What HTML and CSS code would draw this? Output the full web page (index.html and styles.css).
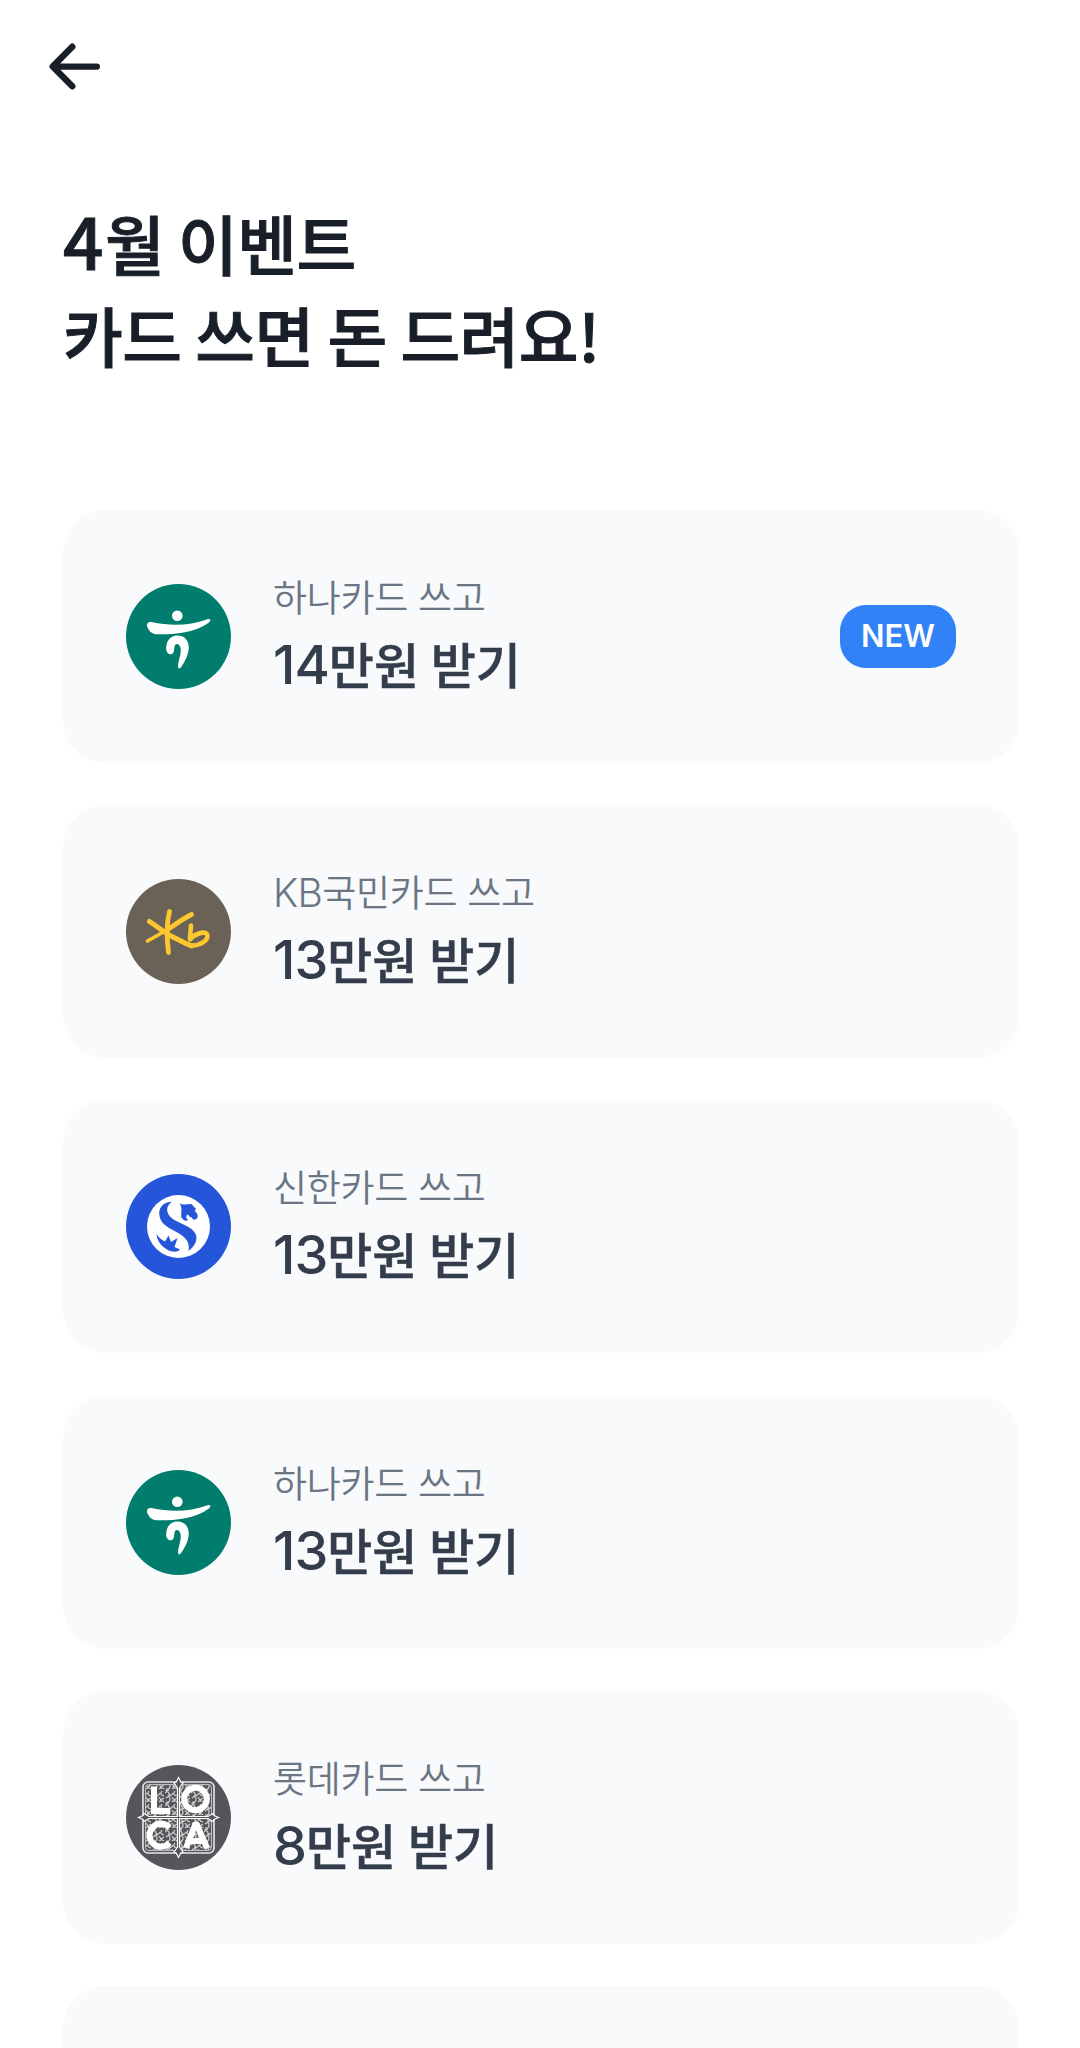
FILE: index.html
```html
<!DOCTYPE html>
<html lang="ko">

<head>
    <meta charset="UTF-8">
    <meta name="viewport" content="width=device-width, initial-scale=1.0">
    <title>4월 이벤트</title>
    <link rel="stylesheet" href="styles.css">
</head>

<body>
    <svg class="symbols" width="0" height="0">
        <symbol id="hana" viewBox="0 0 105 105">
            <circle cx="52.5" cy="52.5" r="52.5" fill="#007d6c" />
            <circle cx="51.3" cy="31.8" r="5.3" fill="#fff" />
            <path fill="#fff" d="M25.2 38C21.5 37.2 20 40.5 21.8 44C24 48.5 27 50.3 32 50.3C47 50.5 68 49.3 83 38.5C85.5 36.5 84.3 34.3 81.5 35.2C63 41.6 46 42.2 25.2 38Z" />
            <path fill="#fff" d="M51.5 51.5C43.5 51.5 39.8 58 40.2 65.5C40.5 69.7 44 71.3 46.3 69.7C49 68 47.5 64.8 49 61.3C50.5 58.5 54.3 60.5 54.7 65C55.2 71 52.3 76.5 52 82C52 85.5 54 84.8 55.5 82.5C59.5 76.5 62.8 70 62.8 63.5C62.8 56 58 51.5 51.5 51.5Z" />
        </symbol>
        <symbol id="kb" viewBox="0 0 105 105">
            <circle cx="52.5" cy="52.5" r="52.5" fill="#6a6256" />
            <g fill="none" stroke="#ffc72f" stroke-linecap="round" stroke-linejoin="round">
                <path stroke-width="4.8" d="M43.5 32.5C40.5 44 40.5 58 42.5 73.5" />
                <path stroke-width="5" d="M23.5 42.5C32 48 37 52.5 44 56.5C51 60 58 64 65.5 67" />
                <path stroke-width="4.8" d="M65.5 35.5C58 39 50 45 41 51" />
                <path stroke-width="3.6" d="M41 51L21.5 62" />
                <path stroke-width="4.6" d="M65 46.5C64.8 52 63.8 56 64 60.5C68 55.5 80 50.5 81.3 56C82.5 61.5 74 66.8 65.5 66.5" />
            </g>
        </symbol>
        <symbol id="shinhan" viewBox="0 0 105 105">
            <circle cx="52.5" cy="52.5" r="52.5" fill="#2556d9" />
            <circle cx="52.5" cy="52.5" r="31.5" fill="#fff" />
            <g fill="#2556d9">
                <path d="M46 27.5C38 28 33 33 33.2 39.5C33.5 49 41 53 49.5 57.5C58 62 64.5 67 62.5 77C70 71.5 73 63.5 68 57.5C62 50.5 51 49 45 43.5C39.5 38 40 32 46 27.5Z" />
                <path d="M53.5 29.2C56 31 60 30.5 64.5 30C67.5 30.5 67 33.5 70 34L68.8 37C71 39 72.5 41.5 71.5 43.5C70 46.5 66 46 66 43.5C64.5 43.5 63 42.5 62 40.5C59.5 41.5 60 44.5 62 46C60.5 47.5 57 46.5 55.5 43.5C54.5 39.5 57 34 53.5 29.2Z" />
                <path d="M30.5 60C33 64 36 66 39 67.5L42.5 61.5L45 68L51.5 64L48.5 73L54 75.5C51.5 78.5 46 78.5 41 75.5C35 72 31 66.5 30.5 60Z" />
            </g>
        </symbol>
        <symbol id="loca" viewBox="0 0 105 105">
            <defs>
                <pattern id="ornament" width="13" height="13" patternUnits="userSpaceOnUse">
                    <path fill="none" stroke="#d2d3d4" stroke-width="1.2" d="M0 2q3-3 4 1t4-1M10 0q-3 4 2 5M1 7q4-3 4 1t-4 3M7 6l2 3 3-2M7 11q2-3 5 0M3 5l3-1M0 13l4-1M9 9v2" />
                </pattern>
            </defs>
            <circle cx="52.5" cy="52.5" r="52.5" fill="#55565a" />
            <rect x="17" y="17" width="71" height="71" rx="5" fill="none" stroke="#e8e8e9" stroke-width="1.6" />
            <rect x="19.5" y="19.5" width="66" height="66" rx="3" fill="url(#ornament)" stroke="#c5c5c7" stroke-width=".9" />
            <path fill="#55565a" stroke="#fff" stroke-width="1.2" d="M52.5 12.5L54.8 17L57 18L53.5 23L53.5 51.5L82 51.5L87 48.5L88 50.5L92.5 52.5L88 54.5L87 56.5L82 53.5L53.5 53.5L53.5 82L57 87L54.8 88L52.5 92.5L50.2 88L48 87L51.5 82L51.5 53.5L23 53.5L18 56.5L17 54.5L12.5 52.5L17 50.5L18 48.5L23 51.5L51.5 51.5L51.5 23L48 18L50.2 17Z" />
            <g fill="none" stroke="#fff" stroke-width="6">
                <path d="M28 21.5V46H44" />
                <circle cx="69.5" cy="34" r="11.3" />
                <path d="M43.5 62.5A11.5 11.5 0 1 0 43.5 78" />
                <path d="M60 83L69 60H71L81 83M64 76H77" />
            </g>
        </symbol>
    </svg>

    <header class="nav">
        <svg class="back" viewBox="0 0 60 60">
            <path d="M30.3 10.7L10.7 30.6L30.3 50.3M11 30.6H54.8" />
        </svg>
    </header>

    <main class="container">
        <h1 class="title"><span class="num">4</span>월 이벤트<br>카드 쓰면 돈 드려요!</h1>

        <section class="cards">
            <article class="card">
                <svg class="logo"><use href="#hana" /></svg>
                <div class="text">
                    <p class="name">하나카드 쓰고</p>
                    <h2 class="reward"><span class="num">14</span>만원 받기</h2>
                </div>
                <span class="badge">NEW</span>
            </article>
            <article class="card">
                <svg class="logo"><use href="#kb" /></svg>
                <div class="text">
                    <p class="name"><span class="latin">KB</span>국민카드 쓰고</p>
                    <h2 class="reward"><span class="num">13</span>만원 받기</h2>
                </div>
            </article>
            <article class="card">
                <svg class="logo"><use href="#shinhan" /></svg>
                <div class="text">
                    <p class="name">신한카드 쓰고</p>
                    <h2 class="reward"><span class="num">13</span>만원 받기</h2>
                </div>
            </article>
            <article class="card">
                <svg class="logo"><use href="#hana" /></svg>
                <div class="text">
                    <p class="name">하나카드 쓰고</p>
                    <h2 class="reward"><span class="num">13</span>만원 받기</h2>
                </div>
            </article>
            <article class="card">
                <svg class="logo"><use href="#loca" /></svg>
                <div class="text">
                    <p class="name">롯데카드 쓰고</p>
                    <h2 class="reward"><span class="num">8</span>만원 받기</h2>
                </div>
            </article>
            <article class="card"></article>
        </section>
    </main>
</body>

</html>
```
FILE: styles.css
```css
* {
    margin: 0;
    padding: 0;
    box-sizing: border-box;
}

body {
    height: 2048px;
    overflow: hidden;
    background-color: #fff;
    font-family: "Noto Sans CJK KR", sans-serif;
    color: #191f28;
}

.symbols {
    display: block;
}

.nav {
    height: 136px;
    padding: 36px 0 0 42px;
}

.back {
    display: block;
    width: 60px;
    height: 60px;
    fill: none;
    stroke: #191f28;
    stroke-width: 6.4;
    stroke-linecap: round;
    stroke-linejoin: round;
}

.container {
    padding: 60px 61px 0 63px;
}

.title {
    height: 314px;
    font-size: 65px;
    font-weight: 500;
    line-height: 92px;
    letter-spacing: -.6px;
    word-spacing: -3.8px;
    white-space: nowrap;
    -webkit-text-stroke: 1px #191f28;
}

.title .num {
    font-size: 71px;
    line-height: 1;
    letter-spacing: 1.6px;
}

.cards {
    display: flex;
    flex-direction: column;
    gap: 42.2px;
}

.card {
    flex: none;
    height: 253px;
    display: flex;
    align-items: center;
    padding: 0 63px;
    background-color: #f9fafc;
    border-radius: 42px;
}

.logo {
    width: 105px;
    height: 105px;
    margin-right: 42px;
}

.text {
    padding-bottom: 7px;
}

.name {
    margin-bottom: 4px;
    font-size: 37px;
    font-weight: 350;
    line-height: 56px;
    letter-spacing: -.3px;
    color: #6b7684;
}

.latin {
    font-family: Inter, sans-serif;
    font-size: 39px;
    line-height: 1;
    letter-spacing: -.7px;
}

.reward {
    font-size: 49px;
    font-weight: 500;
    line-height: 70px;
    word-spacing: -2px;
    color: #333d4b;
    -webkit-text-stroke: .5px #333d4b;
}

.reward .num {
    font-family: Inter, sans-serif;
    font-size: 54px;
    line-height: 1;
    letter-spacing: -1px;
    -webkit-text-stroke: 0;
}

.badge {
    width: 116px;
    height: 63px;
    margin-left: auto;
    border-radius: 26px;
    background-color: #3182f6;
    color: #fff;
    font: 600 31px/61px Inter, sans-serif;
    text-align: center;
}
```
